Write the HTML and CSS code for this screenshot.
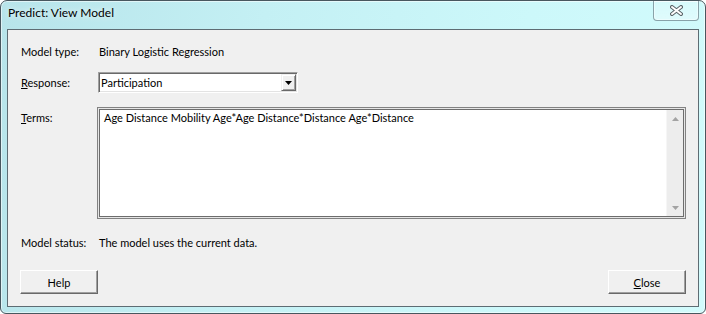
FILE: index.html
```html
<!DOCTYPE html>
<html lang="en">
<head>
    <meta charset="UTF-8">
    <meta name="viewport" content="width=device-width, initial-scale=1.0">
    <title>Predict: View Model</title>
    <link rel="stylesheet" href="styles.css">
</head>
<body>

    <div class="window">
        <div class="titlebar">
            <span class="title">Predict: View Model</span>
        </div>
        <button class="caption-close" title="Close">
            <svg width="13" height="11" viewBox="0 0 13 11">
                <path d="M2 2 L11 9 M11 2 L2 9" stroke="#5a6468" stroke-width="4" stroke-linecap="round" fill="none"/>
                <path d="M2 2 L11 9 M11 2 L2 9" stroke="#ffffff" stroke-width="2" stroke-linecap="round" fill="none"/>
            </svg>
        </button>

        <div class="client">
            <div class="field-row row-type">
                <span class="label">Model type:</span>
                <span class="value">Binary Logistic Regression</span>
            </div>

            <div class="field-row row-response">
                <label class="label" for="response"><u>R</u>esponse:</label>
                <div class="combo" id="response">
                    <span class="combo-text">Participation</span>
                    <span class="combo-btn">
                        <svg width="7" height="4" viewBox="0 0 7 4"><path d="M0 0 H7 L3.5 4 Z" fill="#000"/></svg>
                    </span>
                </div>
            </div>

            <div class="field-row row-terms">
                <label class="label" for="terms"><u>T</u>erms:</label>
                <div class="terms-box" id="terms">
                    <div class="terms-text">Age Distance Mobility Age*Age Distance*Distance Age*Distance</div>
                    <div class="scrollbar">
                        <span class="scroll-arrow">
                            <svg width="7" height="4" viewBox="0 0 7 4"><path d="M0 4 H7 L3.5 0 Z" fill="#a3a3a3"/></svg>
                        </span>
                        <span class="scroll-arrow">
                            <svg width="7" height="4" viewBox="0 0 7 4"><path d="M0 0 H7 L3.5 4 Z" fill="#a3a3a3"/></svg>
                        </span>
                    </div>
                </div>
            </div>

            <div class="field-row row-status">
                <span class="label">Model status:</span>
                <span class="value">The model uses the current data.</span>
            </div>

            <div class="button-row">
                <button class="dlg-button">Help</button>
                <button class="dlg-button"><u>C</u>lose</button>
            </div>
        </div>
    </div>

</body>
</html>
```
FILE: styles.css
```css
body {
    margin: 0;
    background: #ffffff;
    font-family: "Lato", "Liberation Sans", sans-serif;
    font-size: 11px;
    color: #000;
}
.window {
    position: relative;
    box-sizing: border-box;
    width: 706px;
    height: 314px;
    padding: 0 6px 6px 6px;
    display: flex;
    flex-direction: column;
    border: 1px solid #48575f;
    border-radius: 7px 7px 6px 6px;
    background: linear-gradient(100deg, #b7e4ea 0%, #c4f0f4 35%, #ccf8fa 70%, #d2fbfc 100%);
    box-shadow: inset 0 0 0 1px rgba(255, 255, 255, 0.55);
}
.titlebar {
    height: 28px;
    flex: none;
    padding: 4px 0 0 1px;
    box-sizing: border-box;
}
.title {
    font-size: 12px;
    line-height: 16px;
    color: #000;
    text-shadow: 0 0 6px rgba(255, 255, 255, 0.9);
}
.caption-close {
    position: absolute;
    top: 0;
    right: 6px;
    width: 46px;
    height: 20px;
    padding: 0;
    margin: 0;
    display: flex;
    align-items: center;
    justify-content: center;
    border: 1px solid rgba(70, 90, 100, 0.55);
    border-top: none;
    border-radius: 0 0 4px 4px;
    background: linear-gradient(180deg, rgba(255, 255, 255, 0.15), rgba(255, 255, 255, 0.35));
    box-shadow: inset 0 0 0 1px rgba(255, 255, 255, 0.4);
}
.client {
    flex: 1;
    display: flex;
    flex-direction: column;
    border: 1px solid #5e6c73;
    background: #f0f0f0;
    padding: 0 12px 0 12px;
}
.field-row {
    display: grid;
    grid-template-columns: 77px 1fr;
    align-items: center;
}
.label {
    padding-left: 1px;
    line-height: 14px;
}
.value {
    padding-left: 2px;
    line-height: 14px;
}
.row-type {
    margin-top: 15px;
}
.row-response {
    margin-top: 13px;
}
.row-terms {
    margin-top: 14px;
    align-items: start;
}
.row-terms .label {
    margin-top: 4px;
}
.row-status {
    margin-top: 17px;
}
.combo {
    margin-left: 1px;
    width: 200px;
    height: 21px;
    box-sizing: border-box;
    display: flex;
    padding: 1px;
    border: 1px solid;
    border-color: #a0a0a0 #ffffff #ffffff #a0a0a0;
    box-shadow: inset 1px 1px 0 #696969, inset -1px -1px 0 #e3e3e3;
    background: #fff;
}
.combo-text {
    flex: 1;
    padding-left: 1px;
    line-height: 17px;
}
.combo-btn {
    width: 15px;
    height: 17px;
    box-sizing: border-box;
    display: flex;
    align-items: center;
    justify-content: center;
    background: #f0f0f0;
    border-top: 1px solid #f0f0f0;
    border-left: 1px solid #f0f0f0;
    border-right: 1px solid #696969;
    border-bottom: 1px solid #696969;
    box-shadow: inset 1px 1px 0 #ffffff, inset -1px -1px 0 #a0a0a0;
}
.terms-box {
    height: 112px;
    box-sizing: border-box;
    display: flex;
    padding: 2px;
    border: 1px solid #828282;
    box-shadow: inset 0 0 0 1px #e6e6e6, inset 0 0 0 2px #6d6d6d;
    background: #fff;
}
.terms-text {
    flex: 1;
    padding: 1px 0 0 4px;
    line-height: 14px;
}
.scrollbar {
    width: 17px;
    display: flex;
    flex-direction: column;
    justify-content: space-between;
    background: #ededed;
    border-left: 1px solid #f6f6f6;
    box-sizing: border-box;
}
.scroll-arrow {
    height: 17px;
    display: flex;
    align-items: center;
    justify-content: center;
}
.button-row {
    margin-top: 20px;
    display: flex;
    justify-content: space-between;
}
.dlg-button {
    width: 78px;
    height: 24px;
    padding: 0;
    margin: 0;
    font-family: "Lato", "Liberation Sans", sans-serif;
    font-size: 11px;
    color: #000;
    background: #f0f0f0;
    border: 1px solid;
    border-color: #ffffff #696969 #696969 #ffffff;
    box-shadow: inset -1px -1px 0 #a0a0a0;
}
```
